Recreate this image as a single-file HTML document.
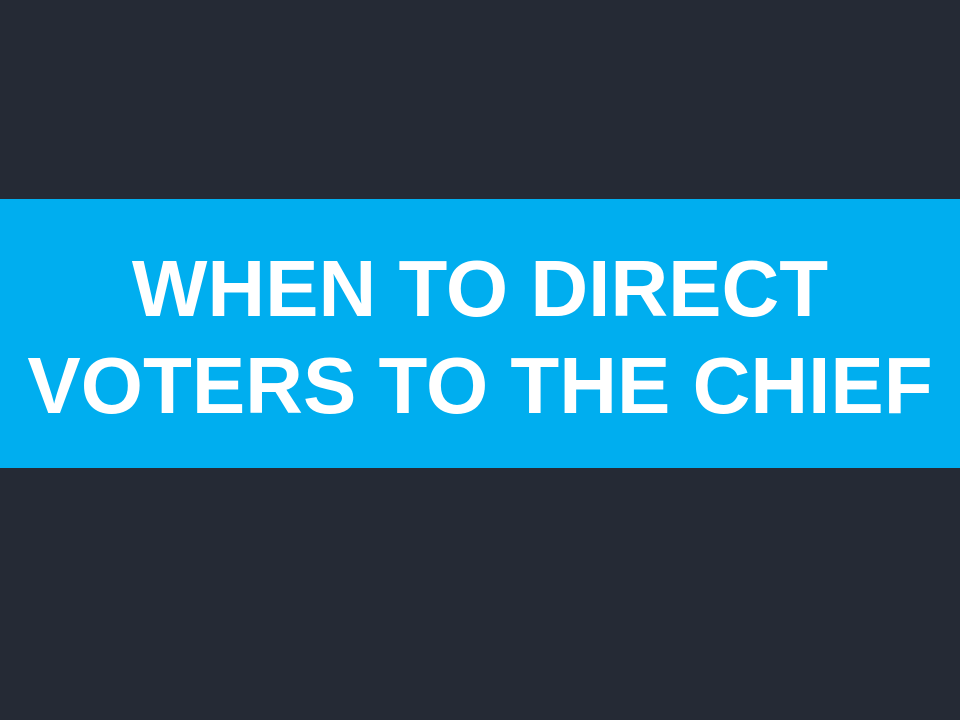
<!DOCTYPE html>
<html><head><style>
html,body{margin:0;padding:0;width:960px;height:720px;background:#252a35;overflow:hidden}
.band{position:absolute;left:0;top:199px;width:960px;height:269px;background:#00aeef}
.t{position:absolute;left:0;width:960px;text-align:center;color:#fff;font-family:"Liberation Sans",sans-serif;font-weight:bold;font-size:80px;line-height:80px;white-space:nowrap}
</style></head><body>
<div class="band"></div>
<div class="t" style="top:249px">WHEN TO DIRECT</div>
<div class="t" style="top:346px">VOTERS TO THE CHIEF</div>
</body></html>
